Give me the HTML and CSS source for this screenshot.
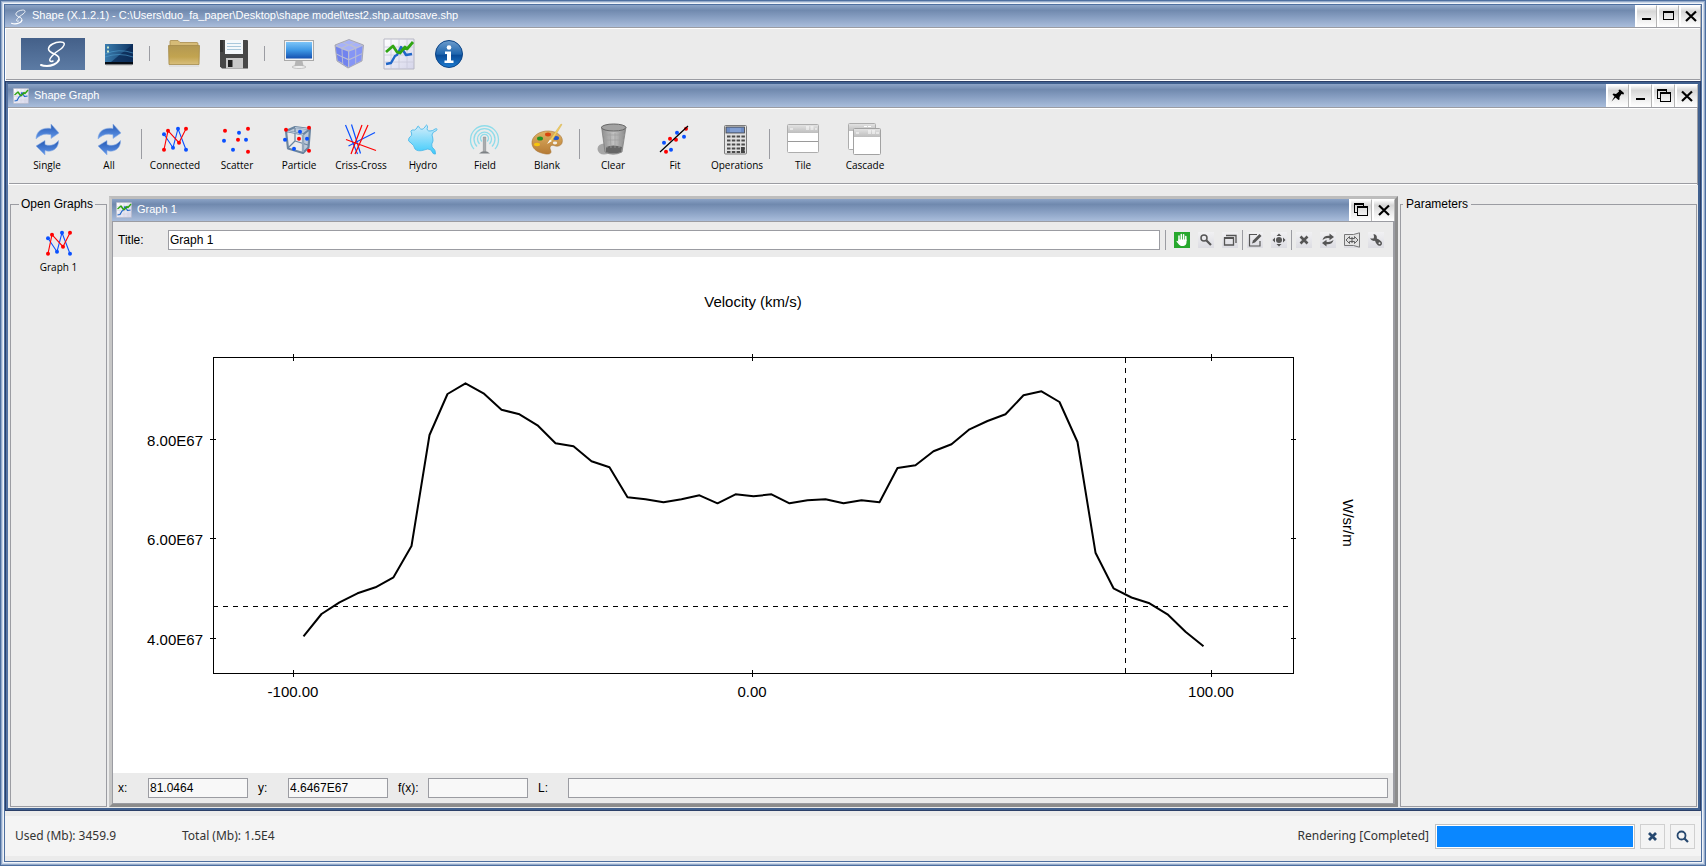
FILE: index.html
```html
<!DOCTYPE html>
<html lang="en">
<head>
<meta charset="utf-8">
<title>Shape (X.1.2.1)</title>
<link rel="stylesheet" href="styles.css">
</head>
<body>
<svg class="defs" aria-hidden="true">
  <defs>
    <linearGradient id="gTerm" x1="0" y1="0" x2="1" y2="0"><stop offset="0" stop-color="#3a7cae"/><stop offset="1" stop-color="#0f3563"/></linearGradient>
    <linearGradient id="gFold" x1="0" y1="0" x2="0" y2="1"><stop offset="0" stop-color="#b39852"/><stop offset=".6" stop-color="#c2a450"/><stop offset="1" stop-color="#d9bf7c"/></linearGradient>
    <linearGradient id="gScreen" x1="0" y1="0" x2="0" y2="1"><stop offset="0" stop-color="#7cc4f8"/><stop offset=".5" stop-color="#3e97e4"/><stop offset="1" stop-color="#1550b0"/></linearGradient>
    <linearGradient id="gInfo" x1="0" y1="0" x2="0" y2="1"><stop offset="0" stop-color="#6d9ccc"/><stop offset=".5" stop-color="#1f66ae"/><stop offset=".55" stop-color="#0a4c98"/><stop offset="1" stop-color="#1c7bd0"/></linearGradient>
    <linearGradient id="gArrow" x1="0" y1="0" x2="0" y2="1"><stop offset="0" stop-color="#2559b4"/><stop offset="1" stop-color="#6398ea"/></linearGradient>
    <linearGradient id="gHydro" x1="0" y1="0" x2="0" y2="1"><stop offset="0" stop-color="#d4edfa"/><stop offset="1" stop-color="#3dcbfb"/></linearGradient>
    <linearGradient id="gPal" x1="0" y1="0" x2="0" y2="1"><stop offset="0" stop-color="#dfb163"/><stop offset="1" stop-color="#b57a34"/></linearGradient>
    <linearGradient id="gBin" x1="0" y1="0" x2="1" y2="0"><stop offset="0" stop-color="#8e8e8e"/><stop offset=".5" stop-color="#c2c2c2"/><stop offset="1" stop-color="#888"/></linearGradient>
    <linearGradient id="gHead" x1="0" y1="0" x2="0" y2="1"><stop offset="0" stop-color="#e2e2e2"/><stop offset="1" stop-color="#bdbdbd"/></linearGradient>
    <linearGradient id="gPaper" x1="0" y1="0" x2="1" y2="1"><stop offset="0" stop-color="#fff"/><stop offset="1" stop-color="#d5d5ea"/></linearGradient>
  </defs>
  <symbol id="s-shape" viewBox="0 0 26 26">
    <path d="M18.500 20C20 17 18.500 15 15.500 13.500C11.500 12 8 10.500 8.500 7.500C9 4 15 1.200 20 1C25 .8 25.500 3.500 22.500 6.500C20 9 16.500 10.500 14 13C11 16 9 18 9.800 19.500C10.500 20.700 12 20.500 13 20" fill="none" stroke="#fff" stroke-width="1.500" stroke-linecap="round"/>
    <path d="M18.800 19C17.500 23 11 25 7 25C4 25 2 24.500 1 24" fill="none" stroke="#fff" stroke-width="2" stroke-linecap="round"/>
  </symbol>
  <symbol id="s-chart" viewBox="0 0 32 32">
    <path d="M1 1H31V31L1 31Z" fill="url(#gPaper)" stroke="#b7b7c4"/>
    <path d="M8 1V31M16 1V31M24 1V31M1 9H31M1 17H31M1 24H31" stroke="#c9c9da" stroke-width=".8" fill="none"/>
    <path d="M3 26L8 25L12 18L14 17L18 9L23 17L29 16" stroke="#1f66c8" stroke-width="2.400" fill="none" stroke-linejoin="round"/>
    <path d="M3 14L10 8L14 14L17 15L22 9L24 11L30 4" stroke="#2fa512" stroke-width="2.800" fill="none" stroke-linejoin="round"/>
  </symbol>
  <symbol id="s-refresh" viewBox="0 0 32 32">
    <path d="M5 15C5 7 12 3 20 4.500V0L28 9L20 14.500V10.800C14 9 9 11 5 15Z" fill="url(#gArrow)" stroke="#8fb0e4" stroke-width=".6"/>
    <path d="M27.500 16.500C28 25 20 29 14 26.500V31L5 22L14 16.500V20.500C19 22.500 24 21 27.500 16.500Z" fill="url(#gArrow)" stroke="#8fb0e4" stroke-width=".6"/>
  </symbol>
  <symbol id="s-connected" viewBox="0 0 32 32">
    <g fill="none" stroke-width="1.100"><path stroke="#0a50ff" d="M5 10.300L14 23.700L19 4.700L27 25.700"/><path stroke="#f00" d="M5 25.700L9 6.700L20 18.700L27 4.700"/></g>
    <g fill="#0a50ff"><circle cx="5" cy="10.300" r="2"/><circle cx="14" cy="23.700" r="2"/><circle cx="19" cy="4.700" r="2"/><circle cx="27" cy="25.700" r="2"/></g>
    <g fill="#f00"><circle cx="5" cy="25.700" r="2"/><circle cx="9" cy="6.700" r="2"/><circle cx="20" cy="18.700" r="2"/><circle cx="27" cy="4.700" r="2"/></g>
  </symbol>
  <symbol id="w-min" viewBox="0 0 22 22"><path d="M6 13h9v2H6z"/></symbol>
  <symbol id="w-max" viewBox="0 0 22 22"><path d="M5 6h11v9H5zM6 8v6h9V8z" fill-rule="evenodd"/></symbol>
  <symbol id="w-rest" viewBox="0 0 22 22"><path d="M4 4h10v3h-1V6H5v7h2v1H4zM7 7h11v10H7zM8 9v7h9V9z" fill-rule="evenodd"/></symbol>
  <symbol id="w-close" viewBox="0 0 22 22"><path d="M6 6.500L16 16M16 6.500L6 16" stroke="#000" stroke-width="2.200"/></symbol>
  <symbol id="w-pin" viewBox="0 0 22 22"><path d="M11.500 5L13 4.500L17 8L16.500 9.500L14.500 9L12.500 12L12.500 14.500L11.500 15L8.500 12.500L4.500 16.500L7.500 11.500L5.500 9.500L6.500 8.500L9 9L12 6.500Z"/></symbol>
</svg>

<div class="app">
  <header class="titlebar titlebar-main">
    <svg class="title-logo" width="20" height="20"><use href="#s-shape" x="2" y="3" width="15" height="16"/></svg>
    <h1 class="title-text">Shape (X.1.2.1) - C:\Users\duo_fa_paper\Desktop\shape model\test2.shp.autosave.shp</h1>
    <div class="win-buttons">
      <button aria-label="Minimize"><svg width="22" height="22"><use href="#w-min"/></svg></button>
      <button aria-label="Maximize"><svg width="22" height="22"><use href="#w-max"/></svg></button>
      <button aria-label="Close"><svg width="22" height="22"><use href="#w-close"/></svg></button>
    </div>
  </header>

  <nav class="main-tools" aria-label="Main">
    <button class="brand" aria-label="Shape"><svg width="26" height="26"><use href="#s-shape"/></svg></button>
    <button class="tool" aria-label="Console"><svg width="32" height="32" viewBox="0 0 32 32">
      <rect x="2" y="6" width="28" height="20" fill="url(#gTerm)"/><path d="M30 6V24H8Z" fill="#0b2a55" opacity=".75"/><path d="M2 16Q16 10 30 15M2 19Q16 14 30 19" stroke="#4f9fd0" stroke-width=".6" fill="none"/><path d="M2 24h28v2.500H2z" fill="#060c14"/><path d="M4 9.500h2M4 13.500h2" stroke="#cde9c8" stroke-width="2"/><path d="M3 27.500h26" stroke="#cfcfcf"/></svg></button>
    <span class="rule rule-short"></span>
    <button class="tool" aria-label="Open"><svg width="32" height="32" viewBox="0 0 32 32">
      <path d="M2 6V3Q2 2.500 3 2.500H10L12 4.500H29Q30 4.500 30 6V12H2Z" fill="#d6bb77" stroke="#a98d4c" stroke-width=".8"/><path d="M.5 7.500H31.500L31 26.500H1Z" fill="url(#gFold)" stroke="#a58a4a" stroke-width=".8"/><path d="M1 28h30" stroke="#d4d4d4"/></svg></button>
    <button class="tool" aria-label="Save"><svg width="32" height="32" viewBox="0 0 32 32">
      <path d="M2 2H29Q30 2 30 3V30.500H4L2 28.500Z" fill="#474747"/><path d="M2 2h3v12H2z" fill="#333"/><rect x="7" y="2" width="18" height="14" fill="#f4f8fb"/><path d="M9 5.500h14M9 8.500h14M9 11.500h14" stroke="#a9c8dc"/><rect x="8" y="20" width="17" height="10.500" fill="#c9c9c9"/><rect x="10" y="22" width="4.500" height="7" fill="#222"/></svg></button>
    <span class="rule rule-short"></span>
    <button class="tool" aria-label="Display"><svg width="32" height="32" viewBox="0 0 32 32">
      <rect x="1.500" y="2.500" width="29" height="20" fill="#f4f4f4" stroke="#a9a9a9"/><rect x="3" y="4" width="26" height="16.500" fill="url(#gScreen)"/><path d="M12.500 23h7l1 5h-9z" fill="#b5b5b5"/><ellipse cx="16" cy="29" rx="7" ry="1.400" fill="#f6f6f6" stroke="#aaa" stroke-width=".7"/></svg></button>
    <button class="tool" aria-label="3D module"><svg width="32" height="32" viewBox="0 0 32 32">
      <path d="M2 7L16 1.500L30.500 7L29 23L15 30L4 23Z" fill="#b9bdd4" stroke="#9c9ca8" stroke-width=".8"/>
      <path d="M4 7L9 5L14 7L8.500 9.500ZM11 4.500L16 2.500L21.500 4.500L16 6.500ZM10.500 10L16 7.500L21.500 10L15.500 12.500ZM18.500 6.500L23 5L28.500 7L23.500 9Z" fill="#a6b1fa"/>
      <path d="M2.800 8.500L8.500 11L8.800 18.200L3.600 15.500ZM9.500 11.500L15 13.500L15 20.800L9.800 18.500ZM3.800 16.700L8.800 19.300L9.300 25L4.800 22.500ZM9.800 19.700L15 22V29L10.300 26.200Z" fill="#7183ee"/>
      <path d="M16.200 13.600L22.200 11.200L22.200 18.200L16.200 21ZM23.200 10.800L29.500 8L28.800 15.200L23.200 17.800ZM16.200 22.200L22.200 19.400V25.800L16.200 29ZM23.200 18.900L28.700 16.200L28.200 22.600L23.200 25.200Z" fill="#8595f5"/></svg></button>
    <button class="tool" aria-label="Graph"><svg width="32" height="32"><use href="#s-chart"/></svg></button>
    <button class="tool" aria-label="About"><svg width="32" height="32" viewBox="0 0 32 32">
      <circle cx="16" cy="16" r="13.500" fill="url(#gInfo)" stroke="#0c4486"/><circle cx="16" cy="9.500" r="2.300" fill="#fff"/><path d="M12 13.500h6v9h2.500v2.500h-9v-2.500H14v-6.500h-2z" fill="#fff"/></svg></button>
  </nav>

  <section class="module">
    <header class="titlebar titlebar-module">
      <svg class="title-icon" width="16" height="16"><use href="#s-chart"/></svg>
      <h2 class="title-text">Shape Graph</h2>
      <div class="win-buttons">
        <button aria-label="Pin"><svg width="22" height="22"><use href="#w-pin"/></svg></button>
        <button aria-label="Minimize"><svg width="22" height="22"><use href="#w-min"/></svg></button>
        <button aria-label="Restore"><svg width="22" height="22"><use href="#w-rest"/></svg></button>
        <button aria-label="Close"><svg width="22" height="22"><use href="#w-close"/></svg></button>
      </div>
    </header>

    <nav class="graph-tools" aria-label="Graph tools">
      <button class="gtool"><svg width="32" height="32"><use href="#s-refresh"/></svg><span>Single</span></button>
      <button class="gtool"><svg width="32" height="32"><use href="#s-refresh"/></svg><span>All</span></button>
      <span class="rule rule-tall"></span>
      <button class="gtool"><svg width="32" height="32"><use href="#s-connected"/></svg><span>Connected</span></button>
      <button class="gtool"><svg width="32" height="32" viewBox="0 0 32 32">
        <g fill="#0a50ff"><circle cx="18" cy="8.700" r="2"/><circle cx="3" cy="16.700" r="2"/><circle cx="25" cy="15.700" r="2"/><circle cx="12" cy="25.700" r="2"/></g><g fill="#f00"><circle cx="4" cy="6.700" r="2"/><circle cx="27" cy="4.700" r="2"/><circle cx="17" cy="15.700" r="2"/><circle cx="27" cy="27.700" r="2"/></g></svg><span>Scatter</span></button>
      <button class="gtool"><svg width="32" height="32" viewBox="0 0 32 32">
        <path d="M4 6L12 3L27 5L20 11ZM20 11L27 5L25.500 24L20 29Z" fill="#a9bbd0" opacity=".7"/><g fill="none" stroke="#6b85a0" stroke-width="2.200" stroke-linejoin="round"><path d="M3 7L20 10.500V29L5 24.500Z"/><path d="M3 7L12 3L27 5L20 10.500M27 5L25.500 23.500L20 29"/><path d="M12 4V17L5 24M12 17L25 21" stroke-width="1.200"/></g><path d="M4 7L20 10.500V28M12 3.500L26 5" fill="none" stroke="#c5d3e2" stroke-width=".9"/>
        <g fill="#0a50ff"><circle cx="17" cy="7.700" r="2"/><circle cx="2" cy="15.700" r="2"/><circle cx="24" cy="14.700" r="2"/><circle cx="11" cy="24.700" r="2"/></g><g fill="#f00"><circle cx="3" cy="5.700" r="2"/><circle cx="26" cy="3.700" r="2"/><circle cx="16" cy="14.700" r="2"/><circle cx="26" cy="26.700" r="2"/></g></svg><span>Particle</span></button>
      <button class="gtool"><svg width="32" height="32" viewBox="0 0 32 32">
        <path d="M.5 1L12.500 30M6.500 .5L15.500 29.500M3.500 22L30 8.500" stroke="#0a50ff" fill="none" stroke-width="1.200"/><path d="M17 1L6 30M23 1L10 30M1 15.500L31 26.500" stroke="#f00" fill="none" stroke-width="1.200"/></svg><span>Criss-Cross</span></button>
      <button class="gtool"><svg width="32" height="32" viewBox="0 0 32 32">
        <path d="M5 6Q8 7 10 4Q11 0 12.500 4Q15 7 18 3Q20 -1 20.500 3Q19 7 23 7Q26 7 28 5Q31 4 29.500 6.500Q25 8 25 11Q26 14 26 17Q24 20 25 23Q29 26 28.500 30Q26 31 24 26Q21 24 17 26Q11 28 8 25Q7 21 4 19Q0 17 2 14Q6 11 4.500 9Q3 7 5 6Z" fill="url(#gHydro)" stroke="#4db9ea" stroke-width=".9"/></svg><span>Hydro</span></button>
      <button class="gtool"><svg width="32" height="32" viewBox="0 0 32 32">
        <g fill="none" stroke="#8fdcea" stroke-width="1.300"><path d="M5 25A14 14 0 1 1 26 25"/><path d="M8 22.500A10.500 10.500 0 1 1 23 22.500"/><path d="M10.500 20A7 7 0 1 1 20.500 20"/><path d="M13 17.500A4 4 0 1 1 18 17.500"/></g><path d="M14.300 13h2.400v15h-2.400z" fill="#a9adb0" stroke="#858585" stroke-width=".5"/><path d="M10 29.500l3-2h5l3 2z" fill="#7e8285"/></svg><span>Field</span></button>
      <button class="gtool"><svg width="32" height="32" viewBox="0 0 32 32">
        <path d="M1 20C0 12 9 6.500 18 7C27 7.500 33 13 31 19C30 22 26 23 23 21.500C20 20.500 18 23 19.500 26C21 29 19 30.500 15 30C8 29 2 26 1 20Z" fill="url(#gPal)" stroke="#a87432" stroke-width=".6"/><ellipse cx="17" cy="10.500" rx="3" ry="1.900" fill="#d8460e"/><ellipse cx="25" cy="14" rx="3" ry="2" fill="#2357c9"/><ellipse cx="9" cy="14.500" rx="3" ry="2" fill="#229322"/><ellipse cx="6" cy="20.500" rx="3" ry="1.700" fill="#f7c50c"/><ellipse cx="24" cy="19" rx="2.200" ry="1.400" fill="#f2efe8"/><path d="M30 0L31 .5L21 17L19 15.500Z" fill="#f2cf62" stroke="#c9a23c" stroke-width=".4"/><path d="M19 15.500L21 17L16 20Z" fill="#fff"/></svg><span>Blank</span></button>
      <span class="rule rule-tall"></span>
      <button class="gtool"><svg width="32" height="32" viewBox="0 0 32 32">
        <ellipse cx="7" cy="25" rx="6.500" ry="5.500" fill="#a6a6a6"/><path d="M4.500 3L8 28Q16 32.500 25 28L29 3Z" fill="url(#gBin)" stroke="#777" stroke-width=".7"/><path d="M9 23Q16 20 25 23L24 28Q16 31 9 28Z" fill="#666"/><ellipse cx="16.700" cy="3.500" rx="12.200" ry="3.500" fill="#a2a2a2" stroke="#666"/><path d="M8 9L10 24M13 9L14 24M18 9V24M23 9L22 24M6 11H28M7 16H27" stroke="#9f9f9f" stroke-width=".7" fill="none"/></svg><span>Clear</span></button>
      <button class="gtool"><svg width="32" height="32" viewBox="0 0 32 32">
        <g fill="#0a50ff"><circle cx="5" cy="18.700" r="2"/><circle cx="18" cy="8.700" r="2"/><circle cx="25" cy="12.700" r="2"/><circle cx="12" cy="25.700" r="2"/></g><g fill="#f00"><circle cx="11" cy="14.700" r="2"/><circle cx="17" cy="15.700" r="2"/><circle cx="27" cy="4.700" r="2"/><circle cx="7" cy="27.700" r="2"/></g><path d="M1 28L29 2" stroke="#000" stroke-width="1.200"/></svg><span>Fit</span></button>
      <button class="gtool"><svg width="32" height="32" viewBox="0 0 32 32">
        <rect x="3.500" y="1.500" width="22" height="28.500" rx="1" fill="#e3e3e3" stroke="#7b7b7b"/><rect x="5" y="3" width="18.500" height="6" fill="#6e8cc4" stroke="#444" stroke-width=".8"/><path d="M9 5h11M9 7h11" stroke="#a9c2ec" stroke-width=".7"/><path d="M6 12.500h18M6 16.500h18M6 20.500h18M6 24.500h18M6 28h18" stroke="#4a4a4a" stroke-width="2" stroke-dasharray="3.500 1.300"/><rect x="20" y="23" width="3.600" height="6" fill="#444"/></svg><span>Operations</span></button>
      <span class="rule rule-tall"></span>
      <button class="gtool"><svg width="32" height="32" viewBox="0 0 32 32">
        <rect x=".5" y=".5" width="31" height="28" rx="1" fill="#fff" stroke="#adadad"/><path d="M1 1h30v8H1z" fill="url(#gHead)"/><path d="M1 17.500h30" stroke="#9a9a9a"/><path d="M3 5h3M19 5h3M23.500 5h3M28 5h2M19 3h3M23.500 3h3" stroke="#fff" stroke-width="1"/></svg><span>Tile</span></button>
      <button class="gtool"><svg width="32" height="32" viewBox="0 0 32 32">
        <rect x="-.5" y="-.5" width="27" height="26" rx="1" fill="#fff" stroke="#adadad"/><path d="M0 0h26v7H0z" fill="url(#gHead)"/><rect x="4.500" y="4.500" width="27" height="26" rx="1" fill="#fff" stroke="#a2a2a2"/><path d="M5 5h26v8H5z" fill="url(#gHead)"/><path d="M7 9h3M19 9h3M23 9h3M27 9h3M19 7h3M23 7h3M15 2.500h3M19 2.500h3" stroke="#fff"/></svg><span>Cascade</span></button>
    </nav>

    <main class="workspace">
      <fieldset class="panel panel-list">
        <legend>Open Graphs</legend>
        <button class="gtool gtool-list"><svg width="32" height="32"><use href="#s-connected"/></svg><span>Graph 1</span></button>
      </fieldset>

      <article class="graph">
        <header class="titlebar titlebar-graph">
          <svg class="title-icon" width="16" height="16"><use href="#s-chart"/></svg>
          <h3 class="title-text">Graph 1</h3>
          <div class="win-buttons">
            <button aria-label="Restore"><svg width="22" height="22"><use href="#w-rest"/></svg></button>
            <button aria-label="Close"><svg width="22" height="22"><use href="#w-close"/></svg></button>
          </div>
        </header>
        <div class="graph-body">
          <div class="graph-head">
            <label class="title-label" for="gtitle">Title:</label>
            <input class="field field-title" id="gtitle" type="text" value="Graph 1">
            <span class="rule rule-head"></span>
            <div class="mini-tools">
              <button class="mini mini-on" aria-label="Pan"><svg width="16" height="16" viewBox="0 0 16 16"><path d="M5 8.500V4M7.300 8V2.500M9.600 8V2.800M11.800 8.500V4.500" stroke="#fff" stroke-width="1.500" stroke-linecap="round"/><path d="M4.300 7.500H12.500V10Q12.500 13.500 9.500 14H7Q5.500 13.500 2.500 9.500Q2.500 8 4.300 9.500Z" fill="#fff"/></svg></button>
              <button class="mini" aria-label="Zoom"><svg width="16" height="16" viewBox="0 0 16 16"><circle cx="6" cy="6" r="3" fill="none" stroke="#555" stroke-width="1.500"/><path d="M8.500 8.500L13 13" stroke="#555" stroke-width="2.200"/></svg></button>
              <button class="mini" aria-label="Window"><svg width="16" height="16" viewBox="0 0 16 16"><path d="M2.500 6h9v7h-9zM4 3.500h10V11" fill="none" stroke="#555" stroke-width="1.300"/><path d="M2 5h10v2H2z" fill="#555"/></svg></button>
              <span class="rule rule-head"></span>
              <button class="mini" aria-label="Edit"><svg width="16" height="16" viewBox="0 0 16 16"><path d="M10 2.500H2.500V14H13V9" fill="none" stroke="#555" stroke-width="1.200"/><path d="M12.500 2L14.500 4L8 10.500L5 11.500L6 8.500Z" fill="#555"/></svg></button>
              <button class="mini" aria-label="Center"><svg width="16" height="16" viewBox="0 0 16 16"><circle cx="8" cy="8" r="3" fill="#555"/><path d="M8 1.500L10.500 4H5.500ZM8 14.500L10.500 12H5.500ZM1.500 8L4 5.500V10.500ZM14.500 8L12 5.500V10.500Z" fill="#555"/></svg></button>
              <span class="rule rule-head"></span>
              <button class="mini" aria-label="Delete"><svg width="16" height="16" viewBox="0 0 16 16"><path d="M4.500 4.500L11.500 11.500M11.500 4.500L4.500 11.500" stroke="#555" stroke-width="2.600"/></svg></button>
              <button class="mini" aria-label="Refresh"><svg width="16" height="16" viewBox="0 0 16 16"><path d="M2.500 8Q3.500 3.300 9.500 3.800V1.500L14 5L9.500 8.300V6.300Q6 5.500 2.500 8Z" fill="#555"/><path d="M13.500 8Q12.500 12.700 6.500 12.200V14.500L2 11L6.500 7.700V9.700Q10 10.500 13.500 8Z" fill="#555"/></svg></button>
              <button class="mini" aria-label="Fit range"><svg width="16" height="16" viewBox="0 0 16 16"><path d="M.5 2.500H9.500L15.500 .8V15.200L9.500 13.500H.5Z" fill="#e4e4e4" stroke="#777"/><path d="M2 8L5.500 4.500V6.500H10.500V4.500L14 8L10.500 11.500V9.500H5.500V11.500Z" fill="#ddd" stroke="#555" stroke-width=".9"/><path d="M8 5v6" stroke="#555"/></svg></button>
              <button class="mini" aria-label="Settings"><svg width="16" height="16" viewBox="0 0 16 16"><path d="M5.500 2Q9.500 2.500 8.800 6.500Q13.500 8.500 14 11Q14 14 11 13.800Q8.500 13 7 8.800Q4 9.500 2 6.500L5.500 6.500Q6.500 5 5.500 2Z" fill="#555"/><circle cx="11.500" cy="11.300" r="1" fill="#e8e8e8"/></svg></button>
            </div>
          </div>

          <div class="canvas">
            <svg class="plot" viewBox="0 0 1280 516" role="img" aria-label="Line profile, velocity in km/s">
              <g class="axis">
                <rect x="100.500" y="100.500" width="1080" height="316"/>
                <path d="M180.500 97V104M639.500 97V104M1098.500 97V104M180.500 413V420M639.500 413V420M1098.500 413V420"/>
                <path d="M97 182.500H103M97 281.500H103M97 381.500H103M1178 182.500H1183M1178 281.500H1183M1178 381.500H1183"/>
                <path class="cursor" d="M100 349.500H1180M1012.500 101V417"/>
              </g>
              <polyline class="curve" points="190.5,379.3 208.5,357 226.5,345.3 244.5,336.3 262.5,330.3 280.5,320.3 298.5,289 316.5,178 334.5,137 352.5,126.3 370.5,136.3 388.5,152.7 406.5,157.3 424.5,168.3 442.5,186.3 460.5,189.3 478.5,204.3 496.5,210.3 514.5,240.3 532.5,242.3 550.5,245.3 568.5,242.3 586.5,238.3 604.5,246.3 622.5,237.3 640.5,239.3 658.5,237.3 676.5,246.3 694.5,243.3 712.5,242.3 730.5,246.3 748.5,243.3 766.5,245.3 784.5,211 802.5,208.3 820.5,194.3 838.5,187.3 856.5,172.3 874.5,164 892.5,157.3 910.5,138.3 928.5,134.3 946.5,145 964.5,185 982.5,295.7 1000.5,331.3 1018.5,340.5 1036.5,346.3 1054.5,357.3 1072.5,374.7 1090.5,389.3"/>
              <g class="plot-text">
                <text x="640" y="50" text-anchor="middle">Velocity (km/s)</text>
                <text x="90" y="189" text-anchor="end">8.00E67</text>
                <text x="90" y="288" text-anchor="end">6.00E67</text>
                <text x="90" y="388" text-anchor="end">4.00E67</text>
                <text x="180" y="440" text-anchor="middle">-100.00</text>
                <text x="639" y="440" text-anchor="middle">0.00</text>
                <text x="1098" y="440" text-anchor="middle">100.00</text>
                <text transform="translate(1230 266) rotate(90)" text-anchor="middle">W/sr/m</text>
              </g>
            </svg>
          </div>

          <div class="readout">
            <label for="rx">x:</label><input class="field" id="rx" type="text" value="81.0464" readonly>
            <label for="ry">y:</label><input class="field" id="ry" type="text" value="4.6467E67" readonly>
            <label for="rf">f(x):</label><input class="field" id="rf" type="text" readonly>
            <label for="rl">L:</label><input class="field field-wide" id="rl" type="text" readonly>
          </div>
        </div>
      </article>

      <fieldset class="panel">
        <legend>Parameters</legend>
      </fieldset>
    </main>
  </section>

  <footer class="status">
    <span class="status-used">Used (Mb): 3459.9</span>
    <span>Total (Mb): 1.5E4</span>
    <span class="status-render" id="render-label">Rendering [Completed]</span>
    <div class="bar" role="progressbar" aria-labelledby="render-label" aria-valuenow="100"><div class="bar-fill"></div></div>
    <button class="status-btn" aria-label="Cancel"><svg width="23" height="23" viewBox="0 0 23 23"><path d="M8 8L15 15M15 8L8 15" stroke="#26486f" stroke-width="2.800"/></svg></button>
    <button class="status-btn" aria-label="Search"><svg width="23" height="23" viewBox="0 0 23 23"><circle cx="10.500" cy="10.500" r="4" fill="none" stroke="#26486f" stroke-width="1.800"/><path d="M13.500 13.500L17 17" stroke="#26486f" stroke-width="2.200"/></svg></button>
  </footer>
</div>
</body>
</html>
```
FILE: styles.css
```css
:root {
  --face: #ebebeb;
  --line: #9b9ca2;
  --ui: "Liberation Sans", Arial, sans-serif;
  --label: "Open Sans", "Noto Sans", sans-serif;
  --status: "Noto Sans", "Open Sans", sans-serif;
}

* { box-sizing: border-box; }

body {
  margin: 0;
  font: 12px/16px var(--ui);
  color: #000;
  background: var(--face);
}

button {
  margin: 0;
  padding: 0;
  border: 0;
  background: none;
  font: inherit;
  color: inherit;
}

svg { display: block; flex: none; }

.defs { position: absolute; width: 0; height: 0; }

.app {
  display: flex;
  flex-direction: column;
  height: 100vh;
  padding: 5px;
  box-shadow:
    inset 0 0 0 1px #4e6f9f,
    inset 0 0 0 2px #93aacb,
    inset 0 0 0 3px #c9d5e6,
    inset 0 0 0 4px #f0f4fa,
    inset 0 0 0 5px #4e6f9f;
}

/* Title bars */

.titlebar {
  display: flex;
  align-items: center;
  flex: none;
  height: 22px;
  background: linear-gradient(#8ba3c6 0, #7089ae 24%, #8aa1c4 60%, #a9bddb 100%);
}

.titlebar-main { padding-left: 4px; }

.titlebar-module {
  height: 23px;
  padding-left: 5px;
}

.titlebar-graph { padding-left: 4px; }

.title-logo { margin-right: 3px; }

.title-icon { margin-right: 5px; }

.title-text {
  margin: 0;
  padding-bottom: 2px;
  flex: 1;
  font-size: 11px;
  font-weight: normal;
  line-height: 16px;
  color: #fff;
}

.win-buttons {
  display: flex;
  align-self: stretch;
}

.win-buttons button {
  display: flex;
  align-items: center;
  justify-content: center;
  width: 23px;
  border: solid #fff;
  border-width: 1px 0 0 2px;
  border-right: 1px solid #b5b5b5;
  background: linear-gradient(#fff 0, #d6d6d6 25%, #ececec 60%, #fff 100%);
}

.win-buttons svg { margin-top: -1px; }

.titlebar-main .win-buttons button { width: 22px; }

/* Toolbars */

.main-tools,
.graph-tools {
  display: flex;
  flex: none;
  border-top: 1px solid var(--line);
  border-right: 1px solid var(--line);
  box-shadow: inset 1px 1px 0 #fff, inset 0 -1px 0 #fff, inset 0 -2px 0 var(--line);
  background: var(--face);
}

.main-tools {
  align-items: center;
  height: 54px;
  padding: 0 16px 2px;
}

.brand {
  display: flex;
  align-items: center;
  justify-content: center;
  width: 64px;
  height: 32px;
  margin-right: 9px;
  background: linear-gradient(#446089, #5c7ba4);
}

.tool {
  display: flex;
  justify-content: center;
  width: 50px;
}

.rule {
  flex: none;
  width: 1px;
  background: var(--line);
}

.rule-short { height: 15px; margin: 0 9px 0 5px; }

.rule-tall { height: 30px; margin: 5px 2px 0 1px; }

.rule-head { height: 20px; }

.graph-tools {
  height: 78px;
  padding: 16px 8px 0;
}

.gtool {
  display: flex;
  flex-direction: column;
  align-items: center;
  gap: 2px;
  width: 62px;
  font: 10px/14px var(--label);
}

.gtool svg { overflow: visible; }

.gtool-list {
  gap: 0;
  width: 100%;
  padding-top: 16px;
}

/* Module window */

.module {
  display: flex;
  flex-direction: column;
  flex: 1;
  min-height: 0;
  border: 3px solid #40608f;
  border-left-color: #5473a2;
  outline: 1px solid #2b3f68;
  outline-offset: -1px;
}

.workspace {
  display: grid;
  grid-template-columns: 97px 1fr 297px;
  gap: 2px;
  flex: 1;
  min-height: 0;
  padding: 11px 1px 1px 2px;
}

.panel {
  min-width: 0;
  margin: 0;
  padding: 0 2px;
  border: 1px solid var(--line);
}

.panel legend { padding: 0 3px; }

.panel-list legend { padding: 0 2px; margin-left: 6px; }

/* Graph window */

.graph {
  display: flex;
  flex-direction: column;
  min-width: 0;
  border: 3px solid;
  border-color: #bdbdbd #8c8c8c #8c8c8c #c6c6c6;
}

.graph-body {
  display: flex;
  flex-direction: column;
  flex: 1;
  min-height: 0;
  border: 1px solid var(--line);
  border-right-width: 2px;
}

.graph-head {
  display: flex;
  align-items: center;
  flex: none;
  height: 35px;
  padding: 0 5px;
}

.title-label { width: 50px; }

.field {
  height: 20px;
  padding: 0 1px;
  border: 1px solid var(--line);
  border-radius: 0;
  outline: 0;
  background: #f8f8f8;
  font: 12px/16px var(--ui);
  color: #000;
}

.field-title {
  flex: 1;
  min-width: 0;
  margin-right: 5px;
  background: #fff;
}

.mini-tools {
  display: flex;
  align-items: center;
  margin-left: 4px;
}

.mini {
  margin: 0 4px;
  background: linear-gradient(#f1f1f3, #dcdce2);
}

.mini-on { background: #27a82d; }

.canvas {
  flex: 1;
  min-height: 0;
  background: #fff;
}

.plot {
  width: 100%;
  height: 100%;
}

.axis {
  fill: none;
  stroke: #000;
  stroke-width: 1;
}

.cursor { stroke-dasharray: 5 5; }

.curve {
  fill: none;
  stroke: #000;
  stroke-width: 2;
  stroke-linejoin: round;
}

.plot-text { font: 15px var(--ui); }

.readout {
  display: flex;
  align-items: center;
  flex: none;
  height: 30px;
  padding: 0 5px;
}

.readout label { width: 30px; }

.readout .field {
  width: 100px;
  margin-right: 10px;
}

.readout .field-wide {
  flex: 1;
  margin-right: 0;
}

/* Status bar */

.status {
  display: flex;
  align-items: center;
  flex: none;
  height: 50px;
  padding: 0 6px 0 10px;
  border: solid var(--face);
  border-width: 5px 0;
  background: #f4f4f4;
  font: 12px/18px var(--status);
  color: #333;
}

.status-used { width: 167px; }

.status-render { margin-left: auto; }

.bar {
  width: 200px;
  height: 25px;
  margin: 0 5px 0 6px;
  padding: 1px;
  border: 1px solid #c2c2c2;
  background: #fff;
}

.bar-fill {
  height: 100%;
  background: #0a87ff;
}

.status-btn {
  width: 25px;
  height: 25px;
  border: 1px solid #d0d0d0;
}

.status-btn + .status-btn { margin-left: 5px; }
```
